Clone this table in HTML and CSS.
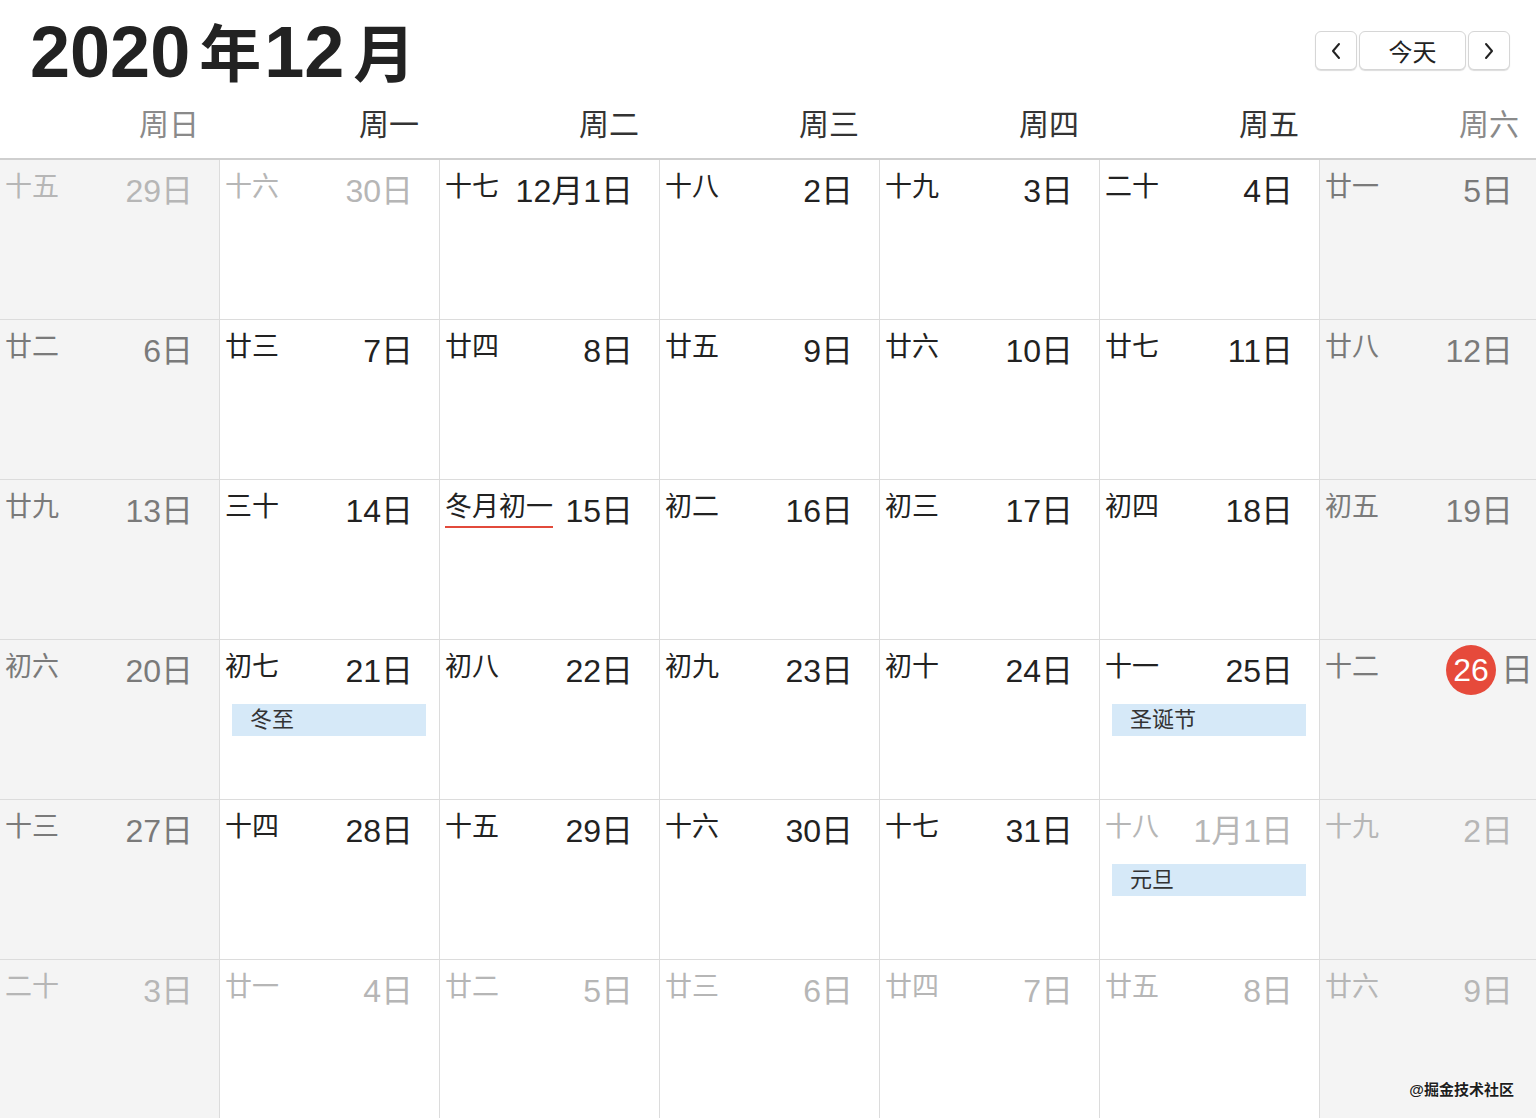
FILE: index.html
```html
<!DOCTYPE html>
<html lang="zh-CN">
<head>
<meta charset="utf-8">
<title>2020年12月</title>
<link rel="stylesheet" href="styles.css">
</head>
<body>
<div class="wrap">
  <header class="top">
    <h1 class="title">2020<span class="cj">年</span>12<span class="cj">月</span></h1>
    <div class="nav">
      <button class="btn arrow" aria-label="上个月"><svg width="12" height="18" viewBox="0 0 12 18"><path d="M9 2 L3 9 L9 16" fill="none" stroke="#222" stroke-width="2" stroke-linecap="round" stroke-linejoin="round"/></svg></button>
      <button class="btn today">今天</button>
      <button class="btn arrow" aria-label="下个月"><svg width="12" height="18" viewBox="0 0 12 18"><path d="M3 2 L9 9 L3 16" fill="none" stroke="#222" stroke-width="2" stroke-linecap="round" stroke-linejoin="round"/></svg></button>
    </div>
  </header>
  <div class="weekdays">
    <div class="wd we">周日</div><div class="wd">周一</div><div class="wd">周二</div><div class="wd">周三</div><div class="wd">周四</div><div class="wd">周五</div><div class="wd we">周六</div>
  </div>
  <div class="grid">
    <!-- row 1 -->
    <div class="cell we other"><div class="head"><span class="lunar">十五</span><span class="date">29日</span></div></div>
    <div class="cell other"><div class="head"><span class="lunar">十六</span><span class="date">30日</span></div></div>
    <div class="cell"><div class="head"><span class="lunar">十七</span><span class="date">12月1日</span></div></div>
    <div class="cell"><div class="head"><span class="lunar">十八</span><span class="date">2日</span></div></div>
    <div class="cell"><div class="head"><span class="lunar">十九</span><span class="date">3日</span></div></div>
    <div class="cell"><div class="head"><span class="lunar">二十</span><span class="date">4日</span></div></div>
    <div class="cell we"><div class="head"><span class="lunar">廿一</span><span class="date">5日</span></div></div>
    <!-- row 2 -->
    <div class="cell we"><div class="head"><span class="lunar">廿二</span><span class="date">6日</span></div></div>
    <div class="cell"><div class="head"><span class="lunar">廿三</span><span class="date">7日</span></div></div>
    <div class="cell"><div class="head"><span class="lunar">廿四</span><span class="date">8日</span></div></div>
    <div class="cell"><div class="head"><span class="lunar">廿五</span><span class="date">9日</span></div></div>
    <div class="cell"><div class="head"><span class="lunar">廿六</span><span class="date">10日</span></div></div>
    <div class="cell"><div class="head"><span class="lunar">廿七</span><span class="date">11日</span></div></div>
    <div class="cell we"><div class="head"><span class="lunar">廿八</span><span class="date">12日</span></div></div>
    <!-- row 3 -->
    <div class="cell we"><div class="head"><span class="lunar">廿九</span><span class="date">13日</span></div></div>
    <div class="cell"><div class="head"><span class="lunar">三十</span><span class="date">14日</span></div></div>
    <div class="cell"><div class="head"><span class="lunar month-start">冬月初一</span><span class="date">15日</span></div></div>
    <div class="cell"><div class="head"><span class="lunar">初二</span><span class="date">16日</span></div></div>
    <div class="cell"><div class="head"><span class="lunar">初三</span><span class="date">17日</span></div></div>
    <div class="cell"><div class="head"><span class="lunar">初四</span><span class="date">18日</span></div></div>
    <div class="cell we"><div class="head"><span class="lunar">初五</span><span class="date">19日</span></div></div>
    <!-- row 4 -->
    <div class="cell we"><div class="head"><span class="lunar">初六</span><span class="date">20日</span></div></div>
    <div class="cell"><div class="head"><span class="lunar">初七</span><span class="date">21日</span></div><div class="event">冬至</div></div>
    <div class="cell"><div class="head"><span class="lunar">初八</span><span class="date">22日</span></div></div>
    <div class="cell"><div class="head"><span class="lunar">初九</span><span class="date">23日</span></div></div>
    <div class="cell"><div class="head"><span class="lunar">初十</span><span class="date">24日</span></div></div>
    <div class="cell"><div class="head"><span class="lunar">十一</span><span class="date">25日</span></div><div class="event">圣诞节</div></div>
    <div class="cell we"><div class="head"><span class="lunar">十二</span><span class="date is-today"><span class="num">26</span>日</span></div></div>
    <!-- row 5 -->
    <div class="cell we"><div class="head"><span class="lunar">十三</span><span class="date">27日</span></div></div>
    <div class="cell"><div class="head"><span class="lunar">十四</span><span class="date">28日</span></div></div>
    <div class="cell"><div class="head"><span class="lunar">十五</span><span class="date">29日</span></div></div>
    <div class="cell"><div class="head"><span class="lunar">十六</span><span class="date">30日</span></div></div>
    <div class="cell"><div class="head"><span class="lunar">十七</span><span class="date">31日</span></div></div>
    <div class="cell other"><div class="head"><span class="lunar">十八</span><span class="date">1月1日</span></div><div class="event">元旦</div></div>
    <div class="cell we other"><div class="head"><span class="lunar">十九</span><span class="date">2日</span></div></div>
    <!-- row 6 -->
    <div class="cell we other"><div class="head"><span class="lunar">二十</span><span class="date">3日</span></div></div>
    <div class="cell other"><div class="head"><span class="lunar">廿一</span><span class="date">4日</span></div></div>
    <div class="cell other"><div class="head"><span class="lunar">廿二</span><span class="date">5日</span></div></div>
    <div class="cell other"><div class="head"><span class="lunar">廿三</span><span class="date">6日</span></div></div>
    <div class="cell other"><div class="head"><span class="lunar">廿四</span><span class="date">7日</span></div></div>
    <div class="cell other"><div class="head"><span class="lunar">廿五</span><span class="date">8日</span></div></div>
    <div class="cell we other"><div class="head"><span class="lunar">廿六</span><span class="date">9日</span></div></div>
  </div>
</div>
<div class="watermark">@掘金技术社区</div>
</body>
</html>
```
FILE: styles.css
```css
html, body {
  margin: 0;
  padding: 0;
  background: #fff;
  overflow: hidden;
  height: 1118px;
}
body {
  font-family: "Liberation Sans", "Noto Sans CJK SC", sans-serif;
  color: #222;
  position: relative;
}
.wrap {
  width: 1540px;
}
.top {
  height: 100px;
  display: flex;
  justify-content: space-between;
  align-items: flex-start;
  padding: 0 30px 0 30px;
  box-sizing: border-box;
}
.title {
  margin: 16px 0 0 0;
  font-size: 72px;
  line-height: 72px;
  font-weight: 700;
  color: #222;
  letter-spacing: 0;
}
.title .cj {
  font-size: 62px;
  margin: 0 3px 0 9px;
}
.nav {
  display: flex;
  gap: 2px;
  margin-top: 31px;
}
.btn {
  height: 39px;
  border: 1px solid #d6d6d6;
  border-radius: 6px;
  background: #fff;
  box-shadow: 0 1px 1px rgba(0, 0, 0, 0.14);
  font-family: "Liberation Sans", "Noto Sans CJK SC", sans-serif;
  color: #222;
  padding: 0;
  display: flex;
  align-items: center;
  justify-content: center;
}
.btn.arrow {
  width: 42px;
}
.btn.today {
  width: 107px;
  font-size: 24px;
}
.weekdays {
  display: grid;
  grid-template-columns: repeat(7, 220px);
  height: 58px;
  border-bottom: 2px solid #cfcfcf;
}
.wd {
  text-align: right;
  padding-right: 21px;
  font-size: 30px;
  line-height: 50px;
  color: #333;
}
.wd.we {
  color: #8a8a8a;
}
.grid {
  display: grid;
  grid-template-columns: repeat(7, 220px);
  grid-auto-rows: 160px;
}
.cell {
  border-right: 1px solid #dcdcdc;
  border-bottom: 1px solid #dcdcdc;
  background: #fff;
  display: flex;
  flex-direction: column;
}
.cell.we {
  background: #f4f4f4;
}
.head {
  display: flex;
  justify-content: space-between;
  align-items: flex-start;
  padding: 0 26px 0 5px;
}
.lunar {
  font-size: 27px;
  line-height: 30px;
  margin-top: 12px;
  color: #222;
}
.date {
  font-size: 32px;
  line-height: 34px;
  margin-top: 14px;
  color: #222;
}
.cell.we .lunar, .cell.we .date {
  color: #7a7a7a;
}
.cell.other .lunar, .cell.other .date {
  color: #b6b6b6;
}
.lunar.month-start {
  padding-bottom: 4px;
  border-bottom: 2px solid #e24a3b;
}
.date.is-today {
  display: flex;
  align-items: center;
  margin-top: 5px;
  margin-right: -20px;
}
.date.is-today .num {
  width: 50px;
  height: 50px;
  border-radius: 50%;
  background: #e64a3b;
  color: #fff;
  display: flex;
  align-items: center;
  justify-content: center;
  margin-right: 5px;
}
.event {
  margin: 16px 13px 0 12px;
  height: 32px;
  line-height: 32px;
  background: #d6e9f8;
  padding-left: 18px;
  font-size: 22px;
  color: #333;
}
.watermark {
  position: absolute;
  right: 22px;
  top: 1078px;
  font-size: 15px;
  font-weight: 700;
  color: #1e1e1e;
  text-shadow: 0 0 2px #fff, 0 0 2px #fff;
  letter-spacing: 0;
}
```
